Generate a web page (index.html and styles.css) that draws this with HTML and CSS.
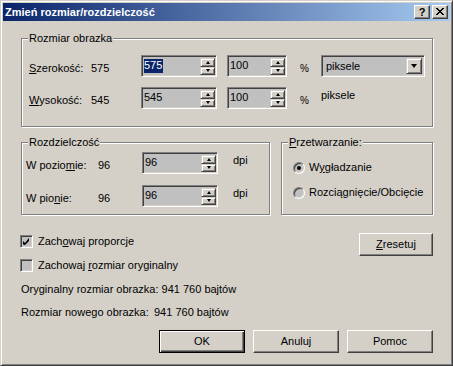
FILE: index.html
```html
<!DOCTYPE html>
<html>
<head>
<meta charset="utf-8">
<link rel="stylesheet" href="styles.css">
</head>
<body>
<div class="window">
  <div class="titlebar">
    <span class="title">Zmień rozmiar/rozdzielczość</span>
    <div class="tbtns">
      <span class="tbtn help">?</span>
      <span class="tbtn close"><svg width="8" height="7" viewBox="0 0 8 7"><path d="M0 0h2v1h-2zM6 0h2v1h-2zM1 1h2v1h-2zM5 1h2v1h-2zM2 2h4v1h-4zM3 3h2v1h-2zM2 4h4v1h-4zM1 5h2v1h-2zM5 5h2v1h-2zM0 6h2v1h-2zM6 6h2v1h-2z" fill="#000"/></svg></span>
    </div>
  </div>
  <div class="content">
    <div class="group g1">
      <span class="legend">Rozmiar obrazka</span>
      <div class="g1grid">
        <span class="lbl"><u>S</u>zerokość:</span>
        <span class="lbl">575</span>
        <div class="spin w76"><span class="val"><span class="sel">575</span></span><div class="arrows"><span class="ab up"><i></i></span><span class="ab down"><i></i></span></div></div>
        <div class="spin w60"><span class="val">100</span><div class="arrows"><span class="ab up"><i></i></span><span class="ab down"><i></i></span></div></div>
        <span class="lbl pct">%</span>
        <div class="combo"><span class="val">piksele</span><span class="dd"><i></i></span></div>

        <span class="lbl"><u>W</u>ysokość:</span>
        <span class="lbl">545</span>
        <div class="spin w76"><span class="val">545</span><div class="arrows"><span class="ab up"><i></i></span><span class="ab down"><i></i></span></div></div>
        <div class="spin w60"><span class="val">100</span><div class="arrows"><span class="ab up"><i></i></span><span class="ab down"><i></i></span></div></div>
        <span class="lbl pct">%</span>
        <span class="lbl top">piksele</span>
      </div>
    </div>
    <div class="midrow">
      <div class="group g2">
        <span class="legend">Rozdzielczość</span>
        <div class="g2grid">
          <span class="lbl">W pozio<u>m</u>ie:</span>
          <span class="lbl">96</span>
          <div class="spin w76"><span class="val">96</span><div class="arrows"><span class="ab up"><i></i></span><span class="ab down"><i></i></span></div></div>
          <span class="lbl top">dpi</span>
          <span class="lbl">W pio<u>n</u>ie:</span>
          <span class="lbl">96</span>
          <div class="spin w76"><span class="val">96</span><div class="arrows"><span class="ab up"><i></i></span><span class="ab down"><i></i></span></div></div>
          <span class="lbl top">dpi</span>
        </div>
      </div>
      <div class="group g3">
        <span class="legend"><u>P</u>rzetwarzanie:</span>
        <div class="radios">
          <div class="radio-row"><span class="radio on"><i></i></span><span>W<u>y</u>gładzanie</span></div>
          <div class="radio-row"><span class="radio"></span><span>Rozciągnięcie/Obcięcie</span></div>
        </div>
      </div>
    </div>
    <div class="lower">
      <div class="checks">
        <div class="check-row"><span class="cb on"><svg width="7" height="7" viewBox="0 0 7 7"><path d="M6 0v3L2 7H1L0 6V3l1 1 1 1z" fill="#000"/></svg></span><span>Zach<u>o</u>waj proporcje</span></div>
        <div class="check-row"><span class="cb"></span><span>Zachowaj <u>r</u>ozmiar oryginalny</span></div>
      </div>
      <span class="btn reset"><span><u>Z</u>resetuj</span></span>
    </div>
    <div class="info">
      <div class="info-row"><span class="ilbl">Oryginalny rozmiar obrazka:</span><span>941 760 bajtów</span></div>
      <div class="info-row"><span class="ilbl">Rozmiar nowego obrazka:</span><span>941 760 bajtów</span></div>
    </div>
    <div class="buttons">
      <span class="btn default"><span>OK</span></span>
      <span class="btn"><span>Anuluj</span></span>
      <span class="btn"><span>Pomoc</span></span>
    </div>
  </div>
</div>
</body>
</html>
```
FILE: styles.css
```css
* { box-sizing: border-box; }
html, body { margin: 0; padding: 0; background: #d4d0c8; }
body { font-family: "Liberation Sans", Arial, sans-serif; font-size: 11px; color: #000; line-height: 13px; }

.window {
  width: 453px; height: 366px;
  border: 1px solid; border-color: #d4d0c8 #404040 #404040 #d4d0c8;
  box-shadow: inset 1px 1px 0 #fff, inset -1px -1px 0 #808080;
  padding: 2px;
  background: #d4d0c8;
}
.titlebar {
  height: 18px;
  background: linear-gradient(to right, #0a246a, #a6caf0);
  display: flex; align-items: center; justify-content: space-between;
}
.title { color: #fff; font-weight: bold; font-size: 11px; padding-left: 2px; }
.tbtns { display: flex; gap: 2px; margin-right: 2px; }
.tbtn {
  width: 16px; height: 14px; background: #d4d0c8;
  border: 1px solid; border-color: #fff #404040 #404040 #fff;
  box-shadow: inset -1px -1px 0 #808080;
  display: flex; align-items: center; justify-content: center;
  font-weight: bold; font-size: 11px; line-height: 12px;
}
.tbtn.help { padding-bottom: 1px; }
.tbtn.close svg { display: block; margin-top: -1px; margin-left: -1px; }

.content { padding: 17px 17px 0 17px; }

.group {
  position: relative;
  border: 1px solid #808080;
  box-shadow: 1px 1px 0 #fff, inset 1px 1px 0 #fff;
  margin-left: 1px;
}
.legend {
  position: absolute; top: -7px; left: 6px;
  background: #d4d0c8; padding: 0 1px; line-height: 13px;
}
.g1 { width: 412px; height: 89px; padding: 16px 0 0 7px; }
.g1grid {
  display: grid;
  grid-template-columns: 62px 50px 86px 73px 21px 104px;
  grid-template-rows: 22px 22px;
  row-gap: 10px;
}
.lbl { padding-top: 7px; white-space: nowrap; }
.lbl.top { padding-top: 2px; }
.lbl.pct { padding-top: 7px; font-size: 10px; }

.spin {
  height: 22px; position: relative;
  border: 1px solid; border-color: #808080 #fff #fff #808080;
  box-shadow: inset 1px 1px 0 #404040, inset -1px -1px 0 #d4d0c8;
  background: #c0c0c0;
  display: flex; justify-content: space-between;
  padding: 2px 1px 1px 2px;
}
.w76 { width: 76px; }
.w60 { width: 60px; }
.val { line-height: 13px; padding-top: 1px; }
.sel { background: #0a246a; color: #fff; display: inline-block; padding: 0 1px 1px 0; }
.arrows { display: flex; flex-direction: column; width: 15px; }
.ab {
  height: 9px; width: 15px; background: #d4d0c8;
  border: 1px solid; border-color: #d4d0c8 #404040 #404040 #d4d0c8;
  box-shadow: inset 1px 1px 0 #fff, inset -1px -1px 0 #808080;
  display: flex; align-items: center; justify-content: center;
}
.ab i { width: 1px; height: 0; border-left: 2px solid transparent; border-right: 2px solid transparent; }
.ab.up i { border-bottom: 3px solid #000; }
.ab.down i { border-top: 3px solid #000; }

.combo {
  width: 104px; height: 22px;
  border: 1px solid; border-color: #808080 #fff #fff #808080;
  box-shadow: inset 1px 1px 0 #404040, inset -1px -1px 0 #d4d0c8;
  background: #c0c0c0;
  display: flex; justify-content: space-between; align-items: flex-start;
  padding: 2px 2px 2px 2px;
}
.combo .val { padding: 2px 0 0 2px; font-size: 11px; }
.dd {
  width: 16px; height: 16px; background: #d4d0c8;
  border: 1px solid; border-color: #d4d0c8 #404040 #404040 #d4d0c8;
  box-shadow: inset 1px 1px 0 #fff, inset -1px -1px 0 #808080;
  display: flex; align-items: center; justify-content: center;
}
.dd i { width: 1px; height: 0; border-left: 3px solid transparent; border-right: 3px solid transparent; border-top: 4px solid #000; }

.midrow { display: flex; gap: 11px; margin-top: 15px; align-items: flex-start; }
.g2 { width: 249px; height: 73px; padding: 9px 0 0 4px; }
.g2grid {
  display: grid;
  grid-template-columns: 72px 44px 91px 30px;
  grid-template-rows: 22px 22px;
  row-gap: 11px;
}
.g3 { width: 152px; height: 73px; margin-left: 0; padding: 18px 0 0 11px; }
.radios { display: flex; flex-direction: column; gap: 12px; }
.radio-row { display: flex; align-items: center; gap: 4px; height: 13px; }
.radio {
  width: 12px; height: 12px; border-radius: 50%;
  border: 1px solid; border-color: #808080 #fff #fff #808080;
  box-shadow: inset 1px 1px 0 #404040, inset -1px -1px 0 #d4d0c8;
  background: #c0c0c0;
  display: flex; align-items: center; justify-content: center;
}
.radio i { width: 4px; height: 4px; border-radius: 50%; background: #000; }

.lower { display: flex; justify-content: space-between; margin-top: 18px; align-items: flex-start; }
.checks { display: flex; flex-direction: column; gap: 11px; padding-top: 2px; }
.check-row { display: flex; align-items: center; gap: 5px; height: 13px; }
.cb {
  width: 13px; height: 13px;
  border: 1px solid; border-color: #808080 #fff #fff #808080;
  box-shadow: inset 1px 1px 0 #404040, inset -1px -1px 0 #d4d0c8;
  background: #c0c0c0;
  display: flex; align-items: center; justify-content: center;
}
.cb svg { display: block; }

.btn {
  display: flex; align-items: center; justify-content: center;
  height: 23px; width: 86px;
  border: 1px solid; border-color: #fff #404040 #404040 #fff;
  box-shadow: inset -1px -1px 0 #808080;
  background: #d4d0c8;
}
.btn.reset { width: 74px; }
.btn.default { border: 1px solid #000; box-shadow: inset 1px 1px 0 #fff, inset -1px -1px 0 #404040, inset -2px -2px 0 #808080; }

.info { display: flex; flex-direction: column; gap: 10px; margin-top: 11px; margin-left: 1px; }
.info-row { display: flex; white-space: nowrap; }
.ilbl { min-width: 133px; padding-right: 3px; }
.buttons { display: flex; justify-content: flex-end; gap: 8px; margin-top: 11px; }
```
